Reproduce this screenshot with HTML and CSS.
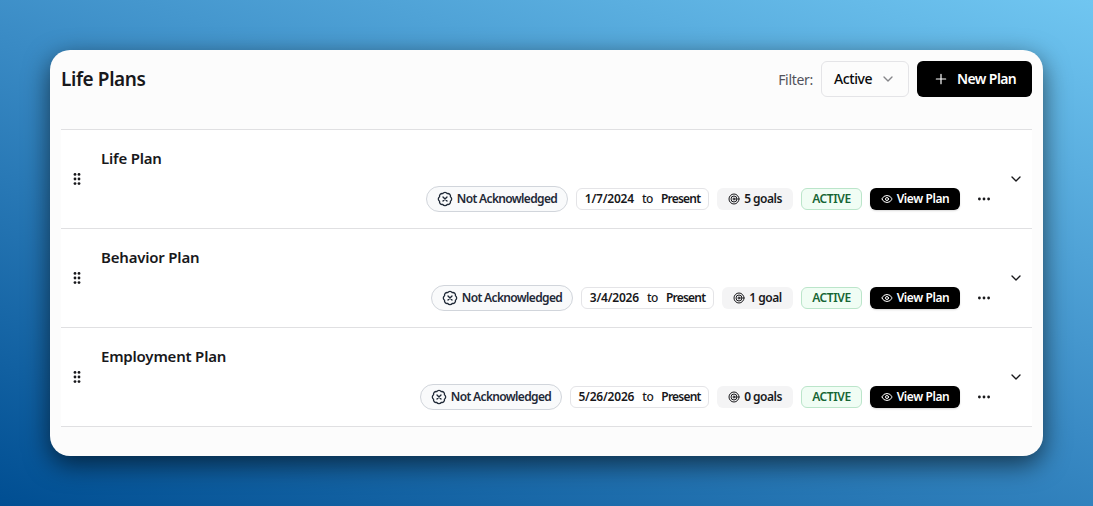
FILE: index.html
```html
<!DOCTYPE html>
<html lang="en">
<head>
  <meta charset="UTF-8">
  <meta name="viewport" content="width=device-width, initial-scale=1.0">
  <title>Life Plans</title>
  <link rel="stylesheet" href="styles.css">
</head>
<body>
  <!-- icons shared by every row -->
  <svg class="sprite" aria-hidden="true">
    <symbol id="grip" viewBox="0 0 16 16">
      <g fill="currentColor">
        <circle cx="6" cy="3.4" r="1.4"/><circle cx="10" cy="3.4" r="1.4"/>
        <circle cx="6" cy="8" r="1.4"/><circle cx="10" cy="8" r="1.4"/>
        <circle cx="6" cy="12.6" r="1.4"/><circle cx="10" cy="12.6" r="1.4"/>
      </g>
    </symbol>
    <symbol id="badge-x" viewBox="0 0 24 24">
      <path d="M3.85 8.62a4 4 0 0 1 4.78-4.77 4 4 0 0 1 6.74 0 4 4 0 0 1 4.78 4.78 4 4 0 0 1 0 6.74 4 4 0 0 1-4.77 4.78 4 4 0 0 1-6.75 0 4 4 0 0 1-4.78-4.77 4 4 0 0 1 0-6.76Z"/>
      <path d="m15 9-6 6M9 9l6 6"/>
    </symbol>
    <symbol id="target" viewBox="0 0 24 24">
      <circle cx="12" cy="12" r="10"/><circle cx="12" cy="12" r="6"/><circle cx="12" cy="12" r="2"/>
    </symbol>
    <symbol id="eye" viewBox="0 0 24 24">
      <path d="M2.06 12.35a1 1 0 0 1 0-.7 10.75 10.75 0 0 1 19.88 0 1 1 0 0 1 0 .7 10.75 10.75 0 0 1-19.88 0"/>
      <circle cx="12" cy="12" r="3"/>
    </symbol>
    <symbol id="dots" viewBox="0 0 16 16">
      <g fill="currentColor" stroke="none"><circle cx="3.4" cy="8" r="1.4"/><circle cx="8" cy="8" r="1.4"/><circle cx="12.6" cy="8" r="1.4"/></g>
    </symbol>
    <symbol id="chevron" viewBox="0 0 24 24"><path d="m6 9 6 6 6-6"/></symbol>
    <symbol id="plus" viewBox="0 0 24 24"><path d="M5 12h14M12 5v14"/></symbol>
  </svg>

  <main class="card">
    <header class="header">
      <h1>Life Plans</h1>
      <span class="filter-label">Filter:</span>
      <button class="select"><span>Active</span><svg class="icon"><use href="#chevron"/></svg></button>
      <button class="new-plan"><svg class="icon"><use href="#plus"/></svg><span>New Plan</span></button>
    </header>

    <section class="plans">
      <article class="plan">
        <svg class="grip"><use href="#grip"/></svg>
        <div class="content">
          <h2>Life Plan</h2>
          <div class="meta">
            <span class="chip ack"><svg class="icon"><use href="#badge-x"/></svg>Not Acknowledged</span>
            <span class="chip dates"><b>1/7/2024</b><span>to</span><b class="end">Present</b></span>
            <span class="chip goals"><svg class="icon"><use href="#target"/></svg>5 goals</span>
            <span class="chip status">ACTIVE</span>
            <button class="chip view"><svg class="icon"><use href="#eye"/></svg>View Plan</button>
            <svg class="icon more"><use href="#dots"/></svg>
          </div>
        </div>
        <svg class="icon expand"><use href="#chevron"/></svg>
      </article>

      <article class="plan">
        <svg class="grip"><use href="#grip"/></svg>
        <div class="content">
          <h2>Behavior Plan</h2>
          <div class="meta">
            <span class="chip ack"><svg class="icon"><use href="#badge-x"/></svg>Not Acknowledged</span>
            <span class="chip dates"><b>3/4/2026</b><span>to</span><b class="end">Present</b></span>
            <span class="chip goals single"><svg class="icon"><use href="#target"/></svg>1 goal</span>
            <span class="chip status">ACTIVE</span>
            <button class="chip view"><svg class="icon"><use href="#eye"/></svg>View Plan</button>
            <svg class="icon more"><use href="#dots"/></svg>
          </div>
        </div>
        <svg class="icon expand"><use href="#chevron"/></svg>
      </article>

      <article class="plan">
        <svg class="grip"><use href="#grip"/></svg>
        <div class="content">
          <h2>Employment Plan</h2>
          <div class="meta">
            <span class="chip ack"><svg class="icon"><use href="#badge-x"/></svg>Not Acknowledged</span>
            <span class="chip dates long"><b>5/26/2026</b><span>to</span><b class="end">Present</b></span>
            <span class="chip goals"><svg class="icon"><use href="#target"/></svg>0 goals</span>
            <span class="chip status">ACTIVE</span>
            <button class="chip view"><svg class="icon"><use href="#eye"/></svg>View Plan</button>
            <svg class="icon more"><use href="#dots"/></svg>
          </div>
        </div>
        <svg class="icon expand"><use href="#chevron"/></svg>
      </article>
    </section>
  </main>
</body>
</html>
```
FILE: styles.css
```css
* {
  box-sizing: border-box;
}

body {
  margin: 0;
  height: 100vh;
  padding: 50px;
  overflow: hidden;
  font-family: "Noto Sans", "Open Sans", sans-serif;
  color: #18181b;
  background: linear-gradient(20deg, #004e92, #3a8bc5 52%, #70c6f1);
}

h1, h2 {
  margin: 0;
  font-weight: 600;
}

button {
  font-family: inherit;
  cursor: pointer;
}

.sprite {
  display: none;
}

.icon {
  width: 16px;
  height: 16px;
  flex-shrink: 0;
  fill: none;
  stroke: currentColor;
  stroke-width: 2;
  stroke-linecap: round;
  stroke-linejoin: round;
}

.card {
  height: 406px;
  padding: 11px;
  border-radius: 20px;
  background: #fcfcfc;
  box-shadow: 0 8px 26px rgba(0, 0, 0, 0.6);
}

.header {
  display: flex;
  align-items: center;
  height: 36px;
  margin-bottom: 32px;
}

.header h1 {
  flex: 1;
  font-size: 19px;
  letter-spacing: -0.4px;
}

.filter-label {
  margin-right: 8px;
  font-size: 14px;
  letter-spacing: -0.3px;
  color: #52525b;
}

.select,
.new-plan {
  display: flex;
  align-items: center;
  height: 36px;
  border-radius: 6px;
  font-size: 14px;
}

.select span,
.new-plan span {
  padding-bottom: 1px;
}

.select {
  justify-content: space-between;
  width: 88px;
  margin-right: 8px;
  padding: 0 12px;
  border: 1px solid #e4e4e7;
  background: #fcfcfc;
  color: #09090b;
  font-weight: 500;
  letter-spacing: -0.4px;
}

.select .icon {
  color: #858589;
}

.new-plan {
  width: 115px;
  padding: 0 16px;
  gap: 8px;
  border: 0;
  background: #000;
  color: #fff;
  font-weight: 600;
  letter-spacing: -0.6px;
  white-space: nowrap;
}

.new-plan .icon {
  stroke-width: 1.8;
}

.plans {
  border-top: 1px solid #e0e0e2;
}

.plan {
  display: flex;
  align-items: center;
  height: 99px;
  padding: 0 8px;
  border-bottom: 1px solid #e0e0e2;
  background: #fff;
}

.grip {
  width: 16px;
  height: 16px;
}

.content {
  flex: 1;
  margin-left: 16px;
}

.content h2 {
  height: 24px;
  line-height: 24px;
  font-size: 15px;
  letter-spacing: -0.2px;
}

.meta {
  display: flex;
  align-items: center;
  justify-content: flex-end;
  gap: 8px;
  margin-top: 16px;
}

.chip {
  display: flex;
  align-items: center;
  justify-content: center;
  height: 22px;
  padding: 0 0 1px;
  border-radius: 6px;
  font-size: 12px;
  font-weight: 600;
  letter-spacing: -0.4px;
  white-space: nowrap;
}

.chip .icon {
  margin-top: 1px;
}

.ack {
  width: 142px;
  height: 26px;
  gap: 4px;
  border: 1px solid #d1d5db;
  border-radius: 13px;
  background: #f9fafb;
  color: #1f2937;
  letter-spacing: -0.65px;
}

.dates {
  width: 133px;
  gap: 8px;
  border: 1px solid #e4e4e7;
}

.dates.long {
  width: 139px;
}

.dates b {
  font-weight: 600;
  letter-spacing: -0.2px;
}

.dates .end {
  letter-spacing: -0.8px;
}

.dates span {
  font-weight: 500;
}

.goals {
  width: 76px;
  gap: 4px;
  background: #f4f4f5;
  letter-spacing: -0.5px;
}

.goals.single {
  width: 71px;
}

.goals .icon,
.view .icon {
  width: 12px;
  height: 12px;
}

.status {
  width: 61px;
  border: 1px solid #bbe5ca;
  background: #f0fdf4;
  color: #166534;
}

.view {
  width: 90px;
  gap: 4px;
  border: 0;
  background: #000;
  color: #fff;
  box-shadow: 0 1px 2px rgba(0, 0, 0, 0.15);
}

.more {
  margin: 0 8px;
}

.expand {
  margin-left: 8px;
}
```
